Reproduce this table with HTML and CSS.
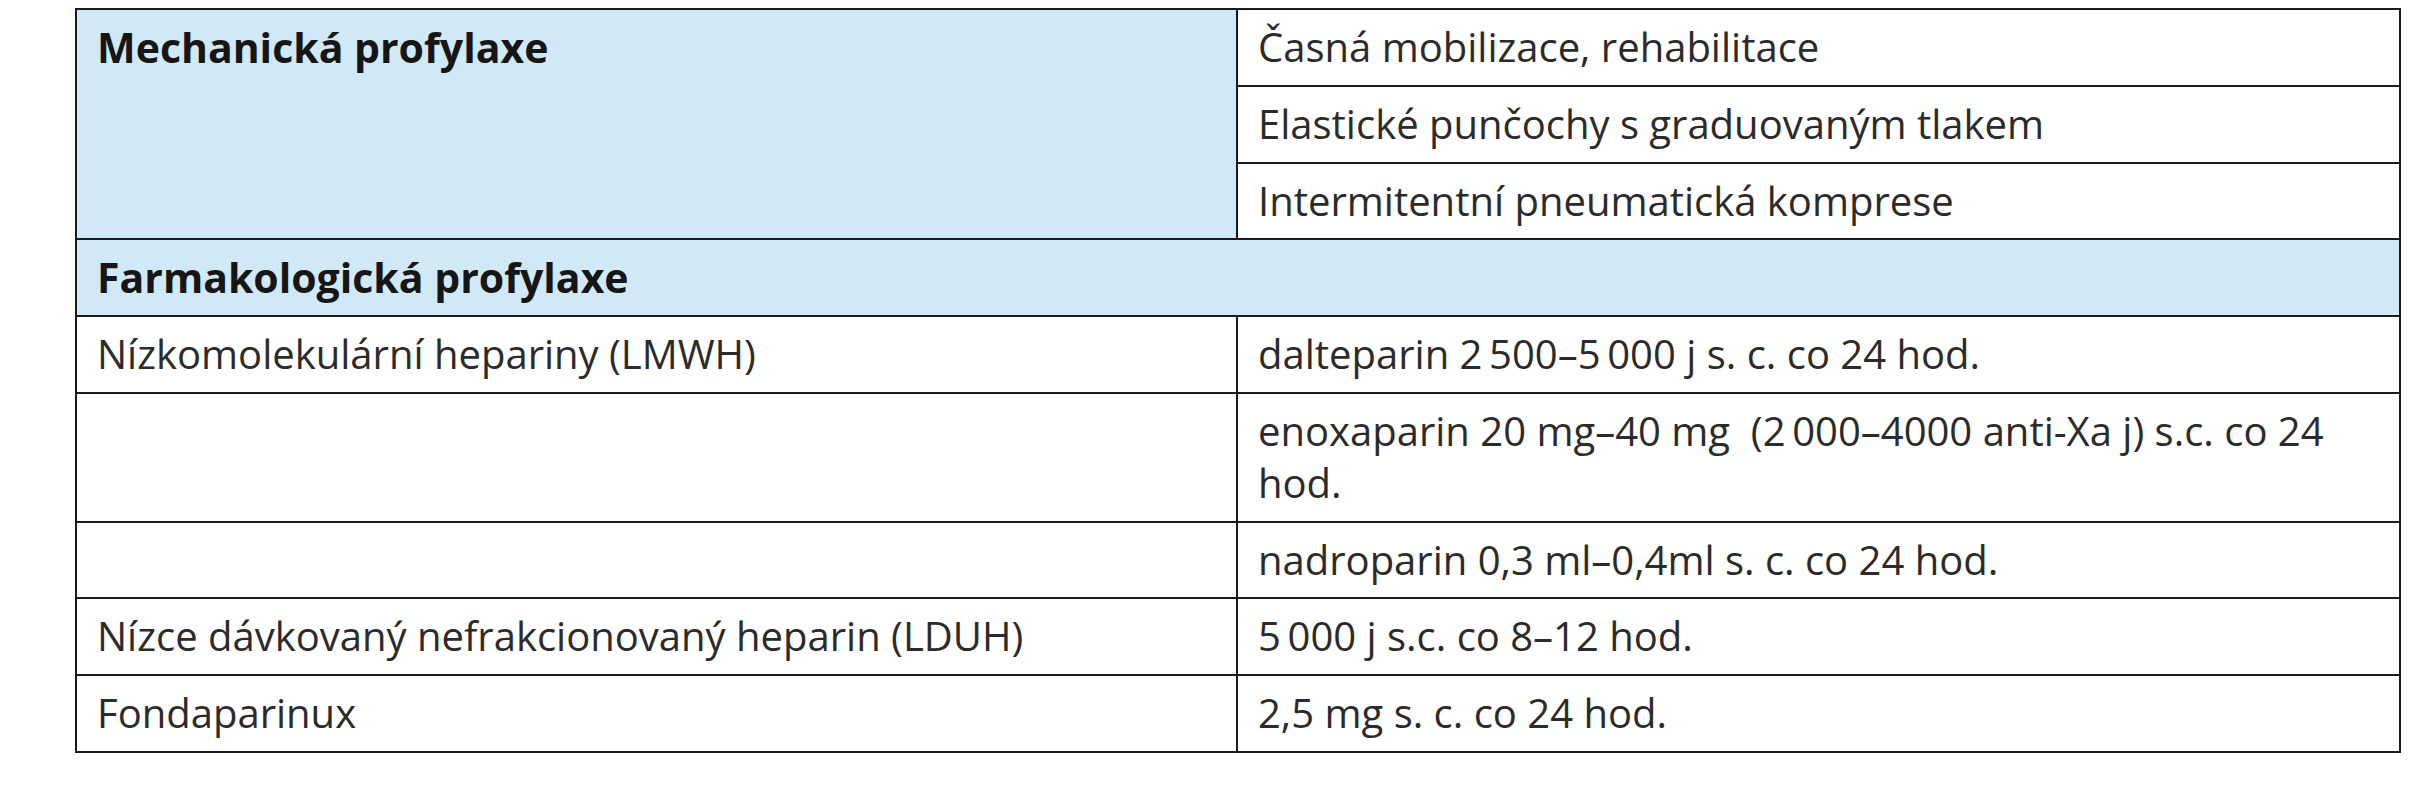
FILE: index.html
```html
<!DOCTYPE html>
<html lang="cs">
<head>
<meta charset="utf-8">
<title>Profylaxe</title>
<link rel="stylesheet" href="styles.css">
</head>
<body>
<div class="table">
  <div class="cell head span-rows">Mechanická profylaxe</div>
  <div class="cell">Časná mobilizace, rehabilitace</div>
  <div class="cell">Elastické punčochy s graduovaným tlakem</div>
  <div class="cell">Intermitentní pneumatická komprese</div>

  <div class="cell head span-cols">Farmakologická profylaxe</div>

  <div class="cell">Nízkomolekulární hepariny (LMWH)</div>
  <div class="cell">dalteparin 2&#8201;500–5&#8201;000 j s. c. co 24 hod.</div>

  <div class="cell"></div>
  <div class="cell">enoxaparin 20 mg–40 mg&nbsp; (2&#8201;000–4000 anti-Xa j) s.c. co 24 hod.</div>

  <div class="cell"></div>
  <div class="cell">nadroparin 0,3 ml–0,4ml s. c. co 24 hod.</div>

  <div class="cell">Nízce dávkovaný nefrakcionovaný heparin (LDUH)</div>
  <div class="cell">5&#8201;000 j s.c. co 8–12 hod.</div>

  <div class="cell">Fondaparinux</div>
  <div class="cell">2,5 mg s. c. co 24 hod.</div>
</div>
</body>
</html>
```

FILE: styles.css
```css
html, body {
  margin: 0;
  padding: 0;
  background: #ffffff;
}

body {
  padding: 8px 0 0 75px;
  font-family: "Open Sans", "Noto Sans", "DejaVu Sans", sans-serif;
  font-size: 40px;
  line-height: 52px;
  color: #2b2b2b;
}

.table {
  box-sizing: border-box;
  width: 2326px;
  display: grid;
  grid-template-columns: 1161px 1163px;
  border-top: 2px solid #1b1b1b;
  border-left: 2px solid #1b1b1b;
}

.cell {
  padding: 11px 20px 11.75px 20px;
  border-right: 2px solid #1b1b1b;
  border-bottom: 2px solid #1b1b1b;
  background: #ffffff;
  min-height: 52px;
}

.head {
  background: #d1e9f6;
  font-size: 41px;
  font-weight: 700;
  color: #161616;
}

.span-rows {
  grid-row: span 3;
}

.span-cols {
  grid-column: span 2;
}
```
